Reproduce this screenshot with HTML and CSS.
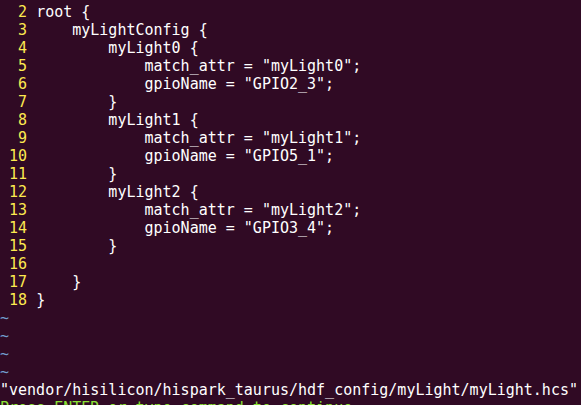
FILE: index.html
```html
<!DOCTYPE html>
<html>
<head>
<meta charset="utf-8">
<link rel="stylesheet" href="styles.css">
</head>
<body>
<div class="term">
<div class="row"><span class="ln">  2 </span>root {</div>
<div class="row"><span class="ln">  3 </span>    myLightConfig {</div>
<div class="row"><span class="ln">  4 </span>        myLight0 {</div>
<div class="row"><span class="ln">  5 </span>            match_attr = "myLight0";</div>
<div class="row"><span class="ln">  6 </span>            gpioName = "GPIO2_3";</div>
<div class="row"><span class="ln">  7 </span>        }</div>
<div class="row"><span class="ln">  8 </span>        myLight1 {</div>
<div class="row"><span class="ln">  9 </span>            match_attr = "myLight1";</div>
<div class="row"><span class="ln"> 10 </span>            gpioName = "GPIO5_1";</div>
<div class="row"><span class="ln"> 11 </span>        }</div>
<div class="row"><span class="ln"> 12 </span>        myLight2 {</div>
<div class="row"><span class="ln"> 13 </span>            match_attr = "myLight2";</div>
<div class="row"><span class="ln"> 14 </span>            gpioName = "GPIO3_4";</div>
<div class="row"><span class="ln"> 15 </span>        }</div>
<div class="row"><span class="ln"> 16 </span></div>
<div class="row"><span class="ln"> 17 </span>    }</div>
<div class="row"><span class="ln"> 18 </span>}</div>
<div class="row tilde">~</div>
<div class="row tilde">~</div>
<div class="row tilde">~</div>
<div class="row tilde">~</div>
<div class="row">"vendor/hisilicon/hispark_taurus/hdf_config/myLight/myLight.hcs"</div>
<div class="row prompt">Press ENTER or type command to continue</div>
</div>
</body>
</html>
```
FILE: styles.css
```css
html, body {
  margin: 0;
  padding: 0;
  background: #300a24;
  overflow: hidden;
}
.term {
  padding-top: 3px;
  font-family: "DejaVu Sans Mono", "Liberation Mono", monospace;
  font-size: 15px;
  line-height: 18px;
  color: #ffffff;
}
.row {
  height: 18px;
  white-space: pre;
}
.ln {
  color: #fce94f;
}
.tilde {
  color: #729fcf;
}
.prompt {
  color: #8ae234;
}
```
